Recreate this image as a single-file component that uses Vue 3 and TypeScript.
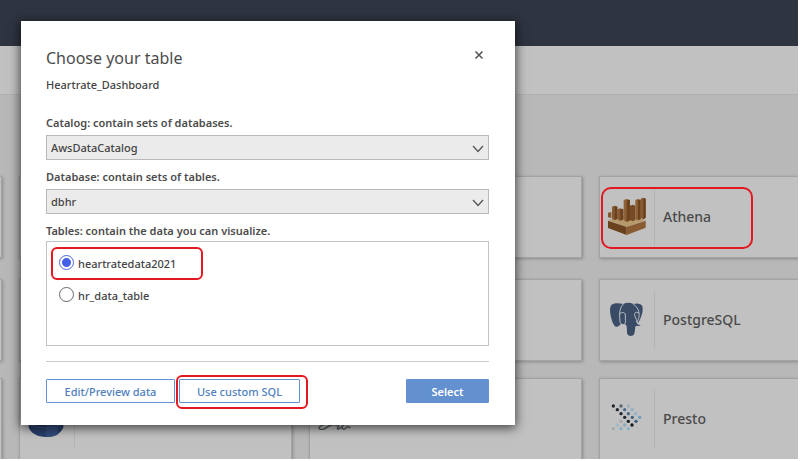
<script setup lang="ts">
import { ref } from 'vue'

type Source = { icon: string; name: string; marked?: boolean }

const topRow: Source[] = [
  { icon: '', name: '' },
  { icon: '', name: '' },
  { icon: '', name: '' },
  { icon: 'athena', name: 'Athena', marked: true },
]
const lowerRows: Source[] = [
  { icon: '', name: '' },
  { icon: '', name: '' },
  { icon: '', name: '' },
  { icon: 'postgres', name: 'PostgreSQL' },
  { icon: '', name: '' },
  { icon: 'disc', name: '' },
  { icon: 'scribble', name: '' },
  { icon: 'presto', name: 'Presto' },
]

const prestoDots: [number, number, string][] = [
  [22, 16, '#20262d'], [45, 16, '#5b646c'], [67, 16, '#a3b0b7'],
  [34, 27, '#20262d'], [56, 27, '#4a6f90'], [78, 27, '#8fb0c4'],
  [45, 39, '#20262d'], [67, 39, '#486782'], [89, 39, '#8fb3ca'],
  [56, 50, '#20262d'], [79, 50, '#44617c'], [101, 50, '#6f9dbd'],
  [45, 62, '#a7a9ad'], [67, 62, '#151b22'], [90, 62, '#3c5c7b'],
  [34, 73, '#9db9c8'], [56, 73, '#86a9bf'], [78, 73, '#10161d'],
  [22, 84, '#a0a9ae'], [45, 84, '#89b0c9'], [67, 84, '#89b0c9'],
]

const catalog = ref('AwsDataCatalog')
const database = ref('dbhr')
const tables = ['heartratedata2021', 'hr_data_table']
const table = ref(tables[0])
</script>

<template>
  <div class="page">
    <header class="topbar"></header>
    <div class="toolbar"></div>
    <main class="sources">
      <div v-for="(row, r) in [topRow, lowerRows]" :key="r" class="grid">
        <div v-for="(s, i) in row" :key="i" class="card">
          <div class="logo" :class="{ ruled: s.icon && s.icon !== 'scribble' }">
            <svg v-if="s.icon === 'athena'" viewBox="0 0 126 126" aria-hidden="true">
              <path d="M6 72 62 58 119 72 62 94Z" fill="#b7996b" />
              <path d="M6 50 16 48V66L6 64Z" fill="#84562e" />
              <path d="M18 32 26 29 34 32V68L26 72 18 68Z" fill="#85572f" />
              <path d="M26 31 34 32V68L26 72Z" fill="#6b411d" />
              <path d="M34 40 43 37 52 40V70L43 74 34 70Z" fill="#875932" />
              <path d="M43 39 52 40V70L43 74Z" fill="#6b421e" />
              <path d="M72 29 80 26 88 29V72L80 76 72 72Z" fill="#754a25" />
              <path d="M88 12 96 9 104 12V69L96 73 88 69Z" fill="#8d6038" />
              <path d="M96 11 104 12V69L96 73Z" fill="#6b411c" />
              <path d="M104 8 112 5 119 8V65L112 70 104 66Z" fill="#885a32" />
              <path d="M112 7 119 8V65L112 70Z" fill="#683f1b" />
              <path d="M53 12 62 9 72 12V73L62 78 53 73Z" fill="#8f6138" />
              <path d="M62 11 72 12V73L62 78Z" fill="#6d431f" />
              <path d="M6 74 62 93V117L6 96Z" fill="#6a421e" />
              <path d="M62 93 119 74V95L62 117Z" fill="#895b33" />
            </svg>
            <svg v-else-if="s.icon === 'postgres'" viewBox="0 0 126 126" aria-hidden="true">
              <path d="M24 14C12 16 11 28 13 44 16 62 22 80 30 83 37 85 41 76 47 74L60 77C64 83 62 97 64 105 67 113 81 112 84 106 88 97 86 87 89 81L102 80 104 77 95 74C105 60 113 37 109 22 105 12 92 12 82 15 71 10 61 11 52 15 42 13 34 11 24 14Z" fill="#3a4b66" />
              <g fill="none" stroke="#b9bec5" stroke-width="3" stroke-linecap="round" stroke-linejoin="round">
                <path d="M52 15C42 25 40 40 41 52L42 67C43 76 50 79 56 75 61 70 57 61 58 48 58 38 43 38 41 46" />
                <path d="M82 15C96 25 101 39 99 52 99 61 92 66 95 75L104 77" />
                <path d="M98 42C89 36 83 42 87 52 90 60 93 63 92 69" />
              </g>
            </svg>
            <svg v-else-if="s.icon === 'presto'" viewBox="0 0 126 126" aria-hidden="true">
              <circle v-for="(d, k) in prestoDots" :key="k" :cx="d[0]" :cy="d[1] + 8" r="5" :fill="d[2]" />
            </svg>
            <svg v-else-if="s.icon === 'disc'" viewBox="0 0 126 126" aria-hidden="true">
              <path d="M8 45H112V88C106 106 86 117 60 117S14 106 8 88Z" fill="#283e6b" />
              <path d="M60 45H95V110Q76 119 60 117Z" fill="#324a79" />
              <path d="M8 78Q60 103 112 78" fill="none" stroke="#405a8b" stroke-width="3" />
            </svg>
            <svg v-else-if="s.icon === 'scribble'" viewBox="0 0 126 126" aria-hidden="true">
              <path d="M22 80C6 87 4 96 20 94 34 91 36 82 47 81L57 79M60 83C65 75 72 80 65 89 62 96 68 94 78 86L83 81M78 88C80 98 89 93 94 86L102 89" fill="none" stroke="#50565b" stroke-width="4" stroke-linecap="round" />
            </svg>
          </div>
          <span class="name">{{ s.name }}</span>
          <i v-if="s.marked" class="mark mark-card"></i>
        </div>
      </div>
    </main>

    <div class="layer">
      <section class="dialog" role="dialog" aria-labelledby="dialog-title">
        <div class="heading">
          <h1 id="dialog-title">Choose your table</h1>
          <button class="close" type="button" aria-label="Close">
            <svg viewBox="0 0 10 10" aria-hidden="true"><path d="M1.5 1.5 8.5 8.5M8.5 1.5 1.5 8.5" /></svg>
          </button>
        </div>
        <p class="dataset">Heartrate_Dashboard</p>

        <label class="caption" for="catalog">Catalog: contain sets of databases.</label>
        <div class="picker">
          <select id="catalog" v-model="catalog"><option>AwsDataCatalog</option></select>
          <svg viewBox="0 0 12 8" aria-hidden="true"><path d="M1 1 6 6.5 11 1" /></svg>
        </div>

        <label class="caption" for="database">Database: contain sets of tables.</label>
        <div class="picker">
          <select id="database" v-model="database"><option>dbhr</option></select>
          <svg viewBox="0 0 12 8" aria-hidden="true"><path d="M1 1 6 6.5 11 1" /></svg>
        </div>

        <div id="tables-caption" class="caption tight">Tables: contain the data you can visualize.</div>
        <div class="tables" role="radiogroup" aria-labelledby="tables-caption">
          <label v-for="(t, i) in tables" :key="t" class="option">
            <input v-model="table" type="radio" name="table" :value="t" />
            <span>{{ t }}</span>
            <i v-if="i === 0" class="mark mark-option"></i>
          </label>
        </div>

        <footer class="actions">
          <button type="button" class="btn">Edit/Preview data</button>
          <button type="button" class="btn custom">Use custom SQL<i class="mark mark-button"></i></button>
          <button type="button" class="btn primary">Select</button>
        </footer>
      </section>
    </div>
  </div>
</template>

<style>
body {
  margin: 0;
  background: #fff;
}
</style>

<style scoped>
* {
  box-sizing: border-box;
}
.page {
  position: relative;
  margin-right: 2px;
  height: calc(100vh - 2px);
  overflow: hidden;
  background: #b8b8b8;
  color: #444;
  font-family: "Noto Sans", "Open Sans", sans-serif;
  font-size: 11px;
  font-weight: 500;
}
.topbar {
  height: 46px;
  background: #2e3440;
}
.toolbar {
  height: 49px;
  background: #c1c1c1;
  border-bottom: 1px solid #b0b0b0;
}
.sources {
  padding-top: 81px;
}
.grid {
  display: grid;
  grid-template-columns: repeat(4, 273px);
  grid-auto-rows: 82px;
  gap: 17px;
  margin: 0 0 21px -271px;
}
.card {
  position: relative;
  display: flex;
  align-items: center;
  background: #c1c1c1;
  border: 1px solid #a3a3a3;
  box-shadow: 1px 1px 3px rgba(0, 0, 0, 0.25);
}
.logo {
  display: flex;
  align-items: center;
  width: 55px;
  height: 58px;
  padding-left: 6px;
}
.logo.ruled {
  border-right: 1px solid #b2b5b7;
}
.logo svg {
  width: 42px;
  height: 42px;
}
.name {
  padding: 0 0 2px 8px;
  font-size: 14px;
  color: #4a4a4a;
}
.mark {
  position: absolute;
  border: 2px solid #e31820;
  border-radius: 6px;
  pointer-events: none;
}
.mark-card {
  left: 1px;
  top: 10px;
  width: 152px;
  height: 62px;
  border-radius: 10px;
}
.layer {
  position: absolute;
  inset: 0;
  padding: 21px;
}
.dialog {
  width: 100%;
  max-width: 494px;
  padding: 26px 26px 22px 25px;
  background: #fff;
  box-shadow: 0 2px 10px 1px rgba(0, 0, 0, 0.65);
}
.heading {
  display: flex;
  justify-content: space-between;
}
h1 {
  margin: 0;
  font-size: 16px;
  font-weight: 400;
  line-height: 22px;
  color: #4c4c4c;
}
.close {
  width: 20px;
  height: 16px;
  padding: 0;
  border: 0;
  background: none;
}
.close svg {
  display: block;
  width: 10px;
  height: 10px;
  margin: auto;
}
.close path,
.picker path {
  fill: none;
  stroke: #555;
  stroke-width: 1.6;
}
.dataset {
  margin: 6px 0 20px;
  line-height: 20px;
}
.caption {
  display: block;
  height: 20px;
  font-weight: 600;
  line-height: 16px;
  color: #4c4c4c;
}
.caption.tight {
  height: 18px;
}
.picker {
  position: relative;
  margin-bottom: 9px;
}
.picker select {
  display: block;
  width: 100%;
  height: 25px;
  padding: 0 24px 0 4px;
  border: 1px solid #b9b9b9;
  border-radius: 0;
  appearance: none;
  background: #ebebeb;
  color: #444;
  font: inherit;
}
.picker svg {
  position: absolute;
  right: 5px;
  top: 10px;
  width: 12px;
  height: 8px;
  pointer-events: none;
}
.picker path {
  stroke-width: 1.3;
}
.tables {
  min-height: 105px;
  padding: 5px 4px;
  border: 1px solid #c3c3c3;
}
.option {
  position: relative;
  display: flex;
  align-items: center;
  gap: 4px;
  height: 32px;
  padding-left: 8px;
}
.option input {
  appearance: none;
  width: 15px;
  height: 15px;
  margin: 0 0 2px;
  border: 1px solid #666;
  border-radius: 50%;
  background: #fff;
}
.option input:checked {
  border-color: #4a66d8;
  background: radial-gradient(circle, #4460e6 4px, #fff 5px);
}
.mark-option {
  left: 0;
  top: 0;
  width: 152px;
  height: 33px;
}
.actions {
  display: flex;
  gap: 4px;
  margin-top: 15px;
  padding-top: 17px;
  border-top: 1px solid #ccc;
}
.btn {
  position: relative;
  width: 129px;
  height: 24px;
  padding: 0;
  border: 1px solid #6390cf;
  border-radius: 1px;
  background: #fff;
  color: #4f7fbd;
  font: inherit;
  white-space: nowrap;
}
.custom {
  width: 121px;
}
.primary {
  width: 83px;
  margin-left: auto;
  background: #6390cf;
  color: #fff;
  font-weight: 600;
}
.mark-button {
  left: -4px;
  top: -5px;
  width: 132px;
  height: 34px;
}
</style>
